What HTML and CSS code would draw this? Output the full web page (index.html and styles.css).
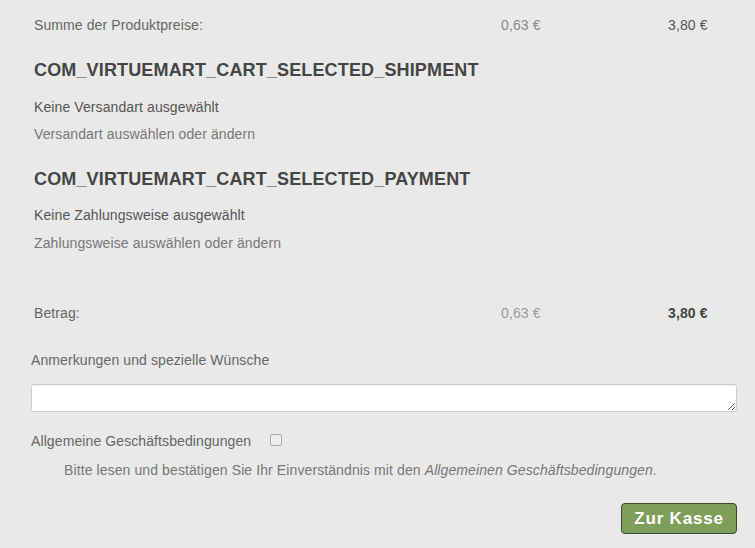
FILE: index.html
```html
<!DOCTYPE html>
<html lang="de">
<head>
<meta charset="utf-8">
<title>Warenkorb</title>
<link rel="stylesheet" href="styles.css">
</head>
<body>
<div class="cart">
  <div class="price-row row-sum">
    <span class="label">Summe der Produktpreise:</span>
    <span class="tax">0,63 €</span>
    <span class="total">3,80 €</span>
  </div>

  <h3 class="section-title first">COM_VIRTUEMART_CART_SELECTED_SHIPMENT</h3>
  <div class="info info-1">Keine Versandart ausgewählt</div>
  <div class="link link-1">Versandart auswählen oder ändern</div>

  <h3 class="section-title second">COM_VIRTUEMART_CART_SELECTED_PAYMENT</h3>
  <div class="info info-2">Keine Zahlungsweise ausgewählt</div>
  <div class="link link-2">Zahlungsweise auswählen oder ändern</div>

  <div class="price-row row-bill">
    <span class="label">Betrag:</span>
    <span class="tax light">0,63 €</span>
    <span class="total strong">3,80 €</span>
  </div>

  <div class="form">
    <label class="comment-label" for="comment">Anmerkungen und spezielle Wünsche</label>
    <textarea id="comment" class="comment" rows="1"></textarea>
    <div class="tos-row">
      <span class="tos-label">Allgemeine Geschäftsbedingungen</span>
      <span class="checkbox"></span>
    </div>
    <div class="tos-note">Bitte lesen und bestätigen Sie Ihr Einverständnis mit den <em>Allgemeinen Geschäftsbedingungen</em>.</div>
    <div class="actions">
      <button class="checkout" type="button">Zur Kasse</button>
    </div>
  </div>
</div>
</body>
</html>
```

FILE: styles.css
```css
html, body {
  margin: 0;
  padding: 0;
  background: #e9e9e9;
}

body {
  font-family: "Liberation Sans", Arial, sans-serif;
  font-size: 14px;
  letter-spacing: 0.1px;
  color: #555;
}

.cart {
  display: flex;
  flex-direction: column;
  padding-top: 15px;
}

.price-row {
  display: grid;
  grid-template-columns: 467px 167px auto;
  padding-left: 34px;
  line-height: 20px;
  color: #666;
}

.price-row .tax {
  color: #888;
}

.price-row .tax.light {
  color: #999;
}

.price-row .total {
  color: #555;
}

.price-row .total.strong {
  font-weight: bold;
  color: #444;
}

.section-title {
  margin: 23px 0 0 0;
  padding-left: 34px;
  font-size: 18px;
  line-height: 24px;
  font-weight: bold;
  letter-spacing: 0.15px;
  color: #454545;
}

.section-title.second {
  margin-top: 23px;
}

.info,
.link {
  padding-left: 34px;
  line-height: 20px;
}

.info {
  color: #555;
}

.link {
  color: #777;
}

.info-1 { margin-top: 15px; }
.link-1 { margin-top: 7px; }
.info-2 { margin-top: 14px; }
.link-2 { margin-top: 8px; }

.row-bill {
  margin-top: 50px;
}

.form {
  display: flex;
  flex-direction: column;
  padding: 0 18px 0 31px;
}

.comment-label {
  margin-top: 27px;
  line-height: 20px;
  color: #666;
}

.comment {
  margin: 14px 0 0 0;
  height: 28px;
  box-sizing: border-box;
  border: 1px solid #ccc;
  border-radius: 3px;
  background: #fff;
  box-shadow: inset 0 1px 1px rgba(0,0,0,0.05);
  font: inherit;
  resize: vertical;
  padding: 4px 6px;
}

.tos-row {
  display: flex;
  align-items: center;
  margin-top: 19px;
  line-height: 20px;
  color: #666;
}

.checkbox {
  display: inline-block;
  width: 10px;
  height: 10px;
  margin-left: 19px;
  border: 1px solid #aaa;
  border-radius: 2px;
  background: #ececec;
  margin-top: -2px;
}

.tos-note {
  margin-top: 9px;
  padding-left: 33px;
  line-height: 20px;
  color: #777;
}

.tos-note em {
  font-style: italic;
}

.actions {
  display: flex;
  justify-content: flex-end;
  margin-top: 23px;
}

.checkout {
  width: 116px;
  height: 31px;
  box-sizing: border-box;
  border: 1px solid #3a4a2c;
  border-radius: 4px;
  background: #7e9f59;
  color: #fff;
  font-family: "Liberation Sans", Arial, sans-serif;
  font-size: 17px;
  font-weight: bold;
  letter-spacing: 0.8px;
  padding: 0;
  cursor: pointer;
}
```
